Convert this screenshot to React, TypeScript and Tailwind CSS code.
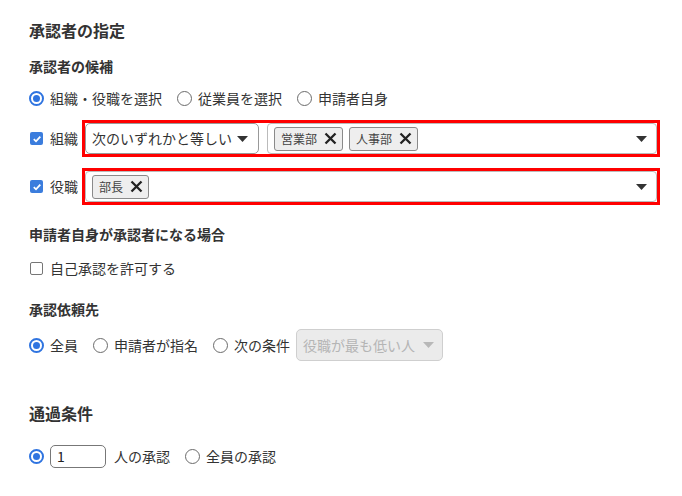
import React from "react";

function Radio({ checked }: { checked?: boolean }) {
  return checked ? (
    <span className="flex h-[15px] w-[15px] shrink-0 items-center justify-center rounded-full border-2 border-[#2f74e0]">
      <span className="h-[7px] w-[7px] rounded-full bg-[#2f74e0]" />
    </span>
  ) : (
    <span className="h-[15px] w-[15px] shrink-0 rounded-full border-[1.5px] border-[#6b6b6b]" />
  );
}

function Checkbox({ checked }: { checked?: boolean }) {
  return checked ? (
    <span className="flex h-[13px] w-[13px] shrink-0 items-center justify-center rounded-[2px] bg-[#3b7ddd]">
      <svg width="10" height="10" viewBox="0 0 10 10">
        <path d="M1.8 5.2 L4 7.3 L8.3 2.7" fill="none" stroke="white" strokeWidth="1.8" />
      </svg>
    </span>
  ) : (
    <span className="h-[13px] w-[13px] shrink-0 rounded-[2px] border-[1.5px] border-[#767676]" />
  );
}

function Caret({ color = "#333" }: { color?: string }) {
  return (
    <svg width="11" height="6" viewBox="0 0 11 6">
      <path d="M0 0 H11 L5.5 6 Z" fill={color} />
    </svg>
  );
}

function Tag({ label }: { label: string }) {
  return (
    <span className="flex h-[24px] items-center gap-[7px] rounded-[3px] border border-[#8a8a8a] bg-[#eeeeee] pl-[6px] pr-[5px] text-[12px] text-[#444]">
      {label}
      <svg width="13" height="13" viewBox="0 0 13 13">
        <path d="M1.5 1.5 L11.5 11.5 M11.5 1.5 L1.5 11.5" stroke="#222" strokeWidth="2.3" />
      </svg>
    </span>
  );
}

function RadioItem({ label, checked }: { label: string; checked?: boolean }) {
  return (
    <span className="flex items-center gap-[6px]">
      <Radio checked={checked} />
      <span>{label}</span>
    </span>
  );
}

export default function App() {
  return (
    <div
      className="h-[496px] w-[682px] overflow-hidden bg-white pl-[29px] pt-[18px] text-[14px] text-[#333]"
      style={{ fontFamily: '"Noto Sans CJK JP", "Noto Sans", sans-serif' }}
    >
      <h1 className="text-[16px] font-bold leading-[24px]">承認者の指定</h1>

      <h2 className="mt-[14px] font-bold leading-[20px]">承認者の候補</h2>
      <div className="mt-3 flex h-[20px] items-center gap-[15px] leading-[20px]">
        <RadioItem label="組織・役職を選択" checked />
        <RadioItem label="従業員を選択" />
        <RadioItem label="申請者自身" />
      </div>

      <div className="mt-3 flex items-center">
        <span className="flex w-[53px] items-center gap-[7px] pl-[1px]">
          <Checkbox checked />
          <span>組織</span>
        </span>
        <div className="flex w-[578px] gap-2 border-[3px] border-[#ff0000]">
          <div className="flex h-[31px] w-[174px] items-center justify-between rounded-[5px] border border-[#999] bg-white pl-[6px] pr-[10px] text-[14px]">
            <span>次のいずれかと等しい</span>
            <Caret />
          </div>
          <div className="flex h-[31px] flex-1 items-center gap-[6px] rounded-[4px] border border-[#bbb] pl-[6px] pr-[9px]">
            <Tag label="営業部" />
            <Tag label="人事部" />
            <span className="ml-auto">
              <Caret />
            </span>
          </div>
        </div>
      </div>

      <div className="mt-[11px] flex items-center">
        <span className="flex w-[53px] items-center gap-[7px] pl-[1px]">
          <Checkbox checked />
          <span>役職</span>
        </span>
        <div className="flex w-[578px] border-[3px] border-[#ff0000]">
          <div className="flex h-[31px] flex-1 items-center gap-[6px] rounded-[4px] border border-[#bbb] pl-[6px] pr-[9px]">
            <Tag label="部長" />
            <span className="ml-auto">
              <Caret />
            </span>
          </div>
        </div>
      </div>

      <h2 className="mt-[19px] font-bold leading-[20px]">申請者自身が承認者になる場合</h2>
      <div className="mt-[14px] flex h-[20px] items-center gap-[7px] pl-[1px]">
        <Checkbox />
        <span>自己承認を許可する</span>
      </div>

      <h2 className="mt-[21px] font-bold leading-[20px]">承認依頼先</h2>
      <div className="mt-[10px] flex h-[32px] items-center">
        <div className="flex items-center gap-[15px]">
          <RadioItem label="全員" checked />
          <RadioItem label="申請者が指名" />
          <RadioItem label="次の条件" />
        </div>
        <div className="ml-[6px] flex h-[32px] w-[147px] items-center gap-2 rounded-[5px] border border-[#cfcfcf] bg-[#ebebeb] pl-[6px] text-[#b5b5b5]">
          <span>役職が最も低い人</span>
          <Caret color="#b8b8b8" />
        </div>
      </div>

      <h1 className="mt-[40px] text-[16px] font-bold leading-[24px]">通過条件</h1>
      <div className="mt-5 flex h-[23px] items-center">
        <Radio checked />
        <div className="ml-[6px] flex h-[23px] w-[56px] items-center rounded-[5px] border border-[#777] pl-[6px] text-[#222]">
          1
        </div>
        <span className="ml-[8px]">人の承認</span>
        <span className="ml-[15px]">
          <RadioItem label="全員の承認" />
        </span>
      </div>
    </div>
  );
}
